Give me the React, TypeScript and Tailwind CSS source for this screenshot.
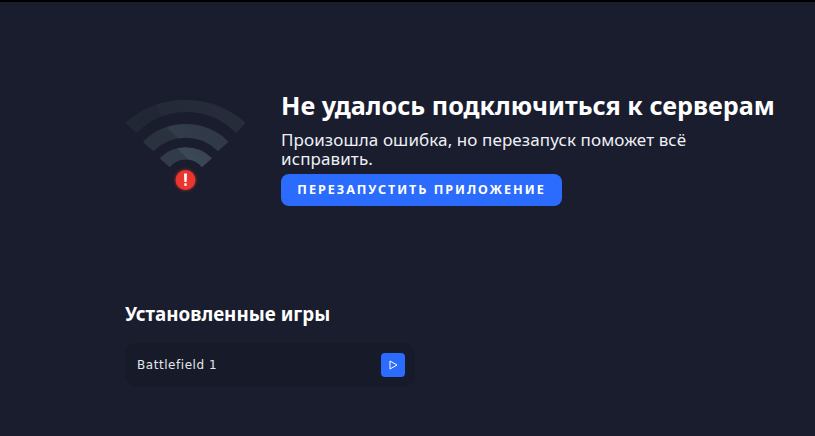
function WifiError() {
  return (
    <svg width="122" height="92" viewBox="0 0 122 92" fill="none" className="shrink-0">
      <defs>
        <linearGradient id="outerArc" x1="1.7" y1="23.3" x2="121.7" y2="-36.7" gradientUnits="userSpaceOnUse">
          <stop offset="0" stopColor="#222835" />
          <stop offset="0.25" stopColor="#202633" />
          <stop offset="0.26" stopColor="#242a38" />
          <stop offset="1" stopColor="#272d3b" />
        </linearGradient>
        <linearGradient id="midArc" x1="16.7" y1="62.3" x2="86.7" y2="-7.7" gradientUnits="userSpaceOnUse">
          <stop offset="0" stopColor="#2a323f" />
          <stop offset="0.42" stopColor="#2a323f" />
          <stop offset="0.44" stopColor="#323c4b" />
          <stop offset="1" stopColor="#2d3645" />
        </linearGradient>
        <linearGradient id="innerArc" x1="38.3" y1="74" x2="83.3" y2="29" gradientUnits="userSpaceOnUse">
          <stop offset="0" stopColor="#323b48" />
          <stop offset="0.43" stopColor="#323b48" />
          <stop offset="0.45" stopColor="#3d4857" />
          <stop offset="1" stopColor="#35404e" />
        </linearGradient>
        <filter id="dotGlow" x="-40%" y="-40%" width="180%" height="180%">
          <feGaussianBlur stdDeviation="1.5" />
        </filter>
      </defs>
      <path d="M1.5 23 A89 89 0 0 1 119.5 23 L111 32 A70 70 0 0 0 11.5 32 Z" fill="url(#outerArc)" stroke="url(#outerArc)" strokeWidth="1.5" strokeLinejoin="round" />
      <path d="M19 41.7 A60 60 0 0 1 102.5 41.7 L93 50.2 A46 46 0 0 0 28.5 50.2 Z" fill="url(#midArc)" stroke="url(#midArc)" strokeWidth="1.5" strokeLinejoin="round" />
      <path d="M35.7 58.3 A36 36 0 0 1 86 58.3 L77 66.3 A21 21 0 0 0 44.7 66.3 Z" fill="url(#innerArc)" stroke="url(#innerArc)" strokeWidth="1.5" strokeLinejoin="round" />
      <circle cx="60.5" cy="80" r="10.5" fill="#e8352e" opacity="0.55" filter="url(#dotGlow)" />
      <circle cx="60.5" cy="80" r="10" fill="#ea362f" />
      <path d="M59 73.5 H62 L61.6 82 H59.4 Z" fill="#fff" />
      <rect x="59.3" y="83.3" width="2.4" height="2.6" fill="#fff" />
    </svg>
  );
}

export default function App() {
  return (
    <div className="w-[815px] h-[436px] overflow-hidden bg-[#1a1d2e] border-t-2 border-black pl-[125px] font-['Noto_Sans','Open_Sans',sans-serif]">
      <div className="flex items-start pt-[87px]">
        <div className="pt-[11px]">
          <WifiError />
        </div>
        <div className="ml-[34px] w-[480px] flex flex-col items-start">
          <h1 className="text-[25.2px] leading-[32px] font-bold text-white whitespace-nowrap">Не удалось подключиться к серверам</h1>
          <p className="mt-[9px] text-[17px] leading-[19px] tracking-[0.1px] text-[#eef0f5]">Произошла ошибка, но перезапуск поможет всё исправить.</p>
          <button className="mt-[6px] w-[281px] h-[32px] rounded-[8px] bg-[#2b6bfd] text-white text-[12.6px] font-bold tracking-[1.95px] text-center">ПЕРЕЗАПУСТИТЬ ПРИЛОЖЕНИЕ</button>
        </div>
      </div>
      <h2 className="mt-[96px] text-[18.8px] leading-[24px] font-bold text-white">Установленные игры</h2>
      <div className="mt-[17px] w-[290px] h-[44px] rounded-[12px] bg-[#171a28] flex items-center justify-between pl-[12px] pr-[10px]">
        <span className="text-[12px] tracking-[0.55px] text-[#e4e7ee] font-['DejaVu_Sans',sans-serif]">Battlefield 1</span>
        <button className="w-[24px] h-[24px] rounded-[4px] bg-[#2b6bfd] flex items-center justify-center">
          <svg width="12" height="12" viewBox="0 0 12 12" fill="none">
            <path d="M3 2 L10 6 L3 10 Z" stroke="#fff" strokeWidth="1" strokeLinejoin="round" />
          </svg>
        </button>
      </div>
    </div>
  );
}
